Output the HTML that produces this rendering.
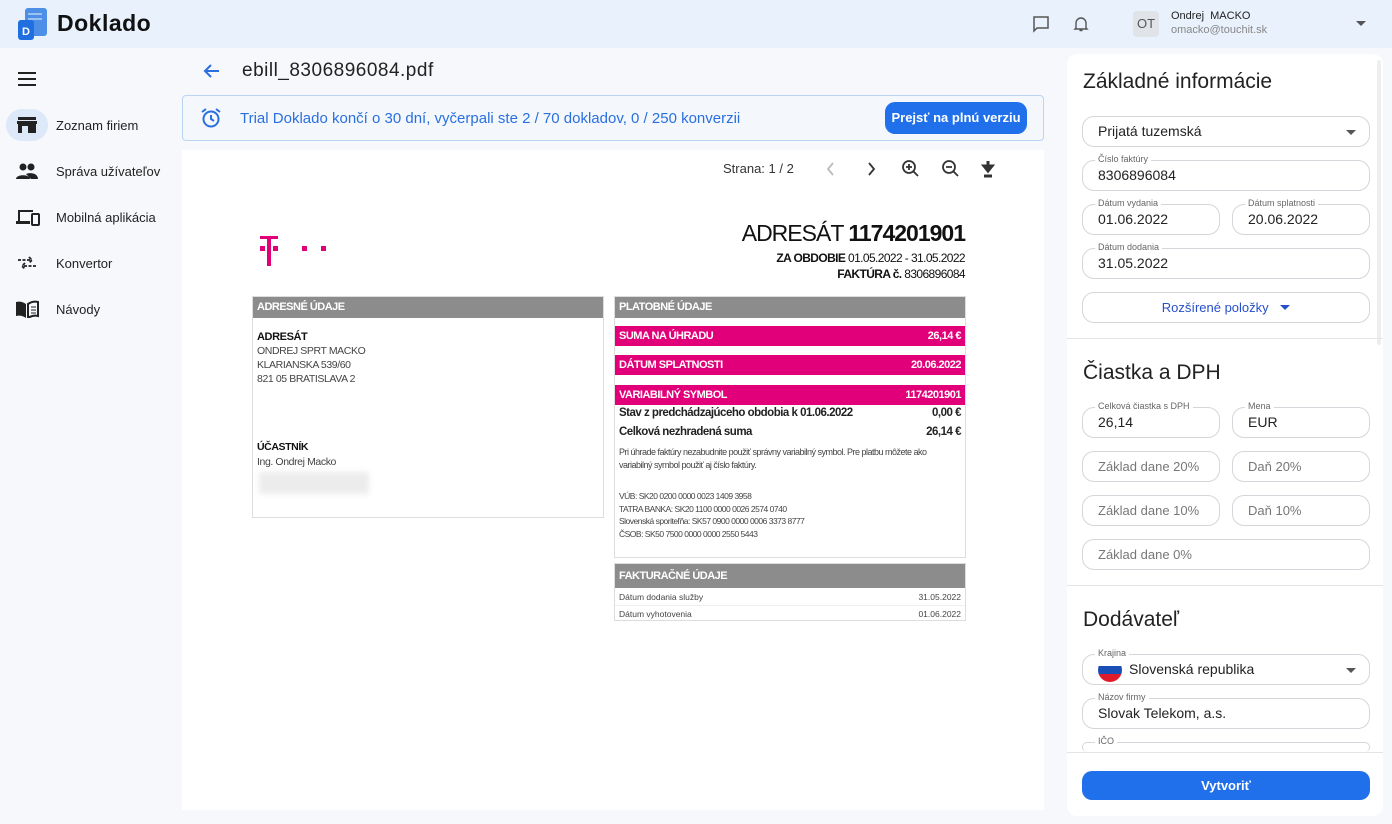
<!DOCTYPE html>
<html><head><meta charset="utf-8"><style>
*{box-sizing:border-box;margin:0;padding:0}
body{width:1392px;height:824px;overflow:hidden;background:#f6f8fb;font-family:"Liberation Sans",sans-serif;color:#222;position:relative}
.abs{position:absolute}
.hdr{left:0;top:0;width:1392px;height:48px;background:#e8f1fc}
.nav{left:16px;font-size:13px;color:#222}
.field{position:absolute;border:1px solid #d3d6da;border-radius:12px;height:31px;background:#fff;font-size:14px;color:#222;padding:0 15px;line-height:29px;white-space:nowrap;overflow:visible}
.field .lb{position:absolute;top:-8px;left:12px;background:#fff;padding:0 3px;font-size:9px;color:#666;line-height:12px}
.sm{font-size:13px;color:#777}
.pdf{font-family:"Liberation Sans Narrow","Liberation Sans",sans-serif}
.gbar{background:#8c8c8c;color:#fff;font-weight:bold;font-size:11px;height:21px;line-height:21px;padding-left:4px;letter-spacing:-.5px}
.mbar{background:#e2007a;color:#fff;font-weight:bold;font-size:11px;height:20px;line-height:20px;padding:0 4px;letter-spacing:-.5px;display:flex;justify-content:space-between}
.sec{font-size:21px;color:#222;position:absolute;left:1083px}
</style></head><body>
<div class="abs hdr"></div>
<svg class="abs" style="left:17px;top:7px" width="34" height="34" viewBox="0 0 34 34"><rect x="8" y="1" width="22" height="28" rx="3" fill="#4d8ee6"/><rect x="11" y="6" width="14" height="2" fill="#9cc2f3"/><rect x="11" y="11" width="14" height="2" fill="#9cc2f3"/><rect x="1" y="13" width="16" height="20" rx="3" fill="#1f6fe0"/><text x="5" y="28" font-size="11" font-weight="bold" fill="#fff" font-family="Liberation Sans">D</text></svg>
<div class="abs" style="left:57px;top:10px;font-size:23px;font-weight:bold;color:#111;letter-spacing:.5px">Doklado</div>
<svg class="abs" style="left:1032px;top:15px" width="18" height="18" viewBox="0 0 18 18"><path d="M2 2h14v11H5l-3 3z" fill="none" stroke="#555" stroke-width="1.5"/></svg>
<svg class="abs" style="left:1073px;top:15px" width="16" height="18" viewBox="0 0 16 18"><path d="M3 13V8a5 5 0 0110 0v5l1 1H2zM6.5 15.5h3" fill="none" stroke="#555" stroke-width="1.4"/></svg>
<div class="abs" style="left:1133px;top:11px;width:26px;height:26px;background:#e0e4e8;border-radius:4px;font-size:13px;color:#555;text-align:center;line-height:26px">OT</div>
<div class="abs" style="left:1171px;top:10px;font-size:11px;color:#222">Ondrej&nbsp; MACKO</div>
<div class="abs" style="left:1171px;top:24px;font-size:11px;color:#888">omacko@touchit.sk</div>
<div class="abs" style="left:1356px;top:21px;border:5px solid transparent;border-top:5px solid #555"></div>

<svg class="abs" style="left:17px;top:71px" width="20" height="16"><path d="M1 2h18M1 8h18M1 14h18" stroke="#222" stroke-width="2"/></svg>
<div class="abs" style="left:6px;top:109px;width:42px;height:32px;border-radius:16px;background:#dde8f8"></div>
<svg class="abs" style="left:16px;top:116px" width="22" height="18"><path d="M2 1h18v3H2z M1 5h20v3H1z M2 8h18v9H2z" fill="#222"/><rect x="6" y="10" width="6" height="7" fill="#dde8f8"/></svg>
<div class="abs nav" style="left:56px;top:118px">Zoznam firiem</div>
<svg class="abs" style="left:16px;top:162px" width="22" height="18"><circle cx="7" cy="5" r="3.5" fill="#222"/><circle cx="15" cy="5" r="3.5" fill="#222"/><path d="M0 17c0-5 14-5 14 0zM10 12c4-2 12-1 12 5h-7z" fill="#222"/></svg>
<div class="abs nav" style="left:56px;top:164px">Správa užívateľov</div>
<svg class="abs" style="left:15px;top:208px" width="25" height="18"><path d="M3 2h15v2H5v10H3z M1 13h14v3H1z" fill="#222"/><rect x="17" y="6" width="7" height="11" rx="1" fill="none" stroke="#222" stroke-width="2"/></svg>
<div class="abs nav" style="left:56px;top:210px">Mobilná aplikácia</div>
<svg class="abs" style="left:16px;top:255px" width="22" height="16"><path d="M2 5h14M13 2l3 3-3 3M20 11H6M9 8l-3 3 3 3" fill="none" stroke="#222" stroke-width="1.8" stroke-dasharray="3 1.5"/></svg>
<div class="abs nav" style="left:56px;top:256px">Konvertor</div>
<svg class="abs" style="left:15px;top:300px" width="24" height="18"><path d="M1 2c4-1 7 0 10 2v14c-3-2-6-3-10-2z" fill="#222"/><path d="M13 4c3-2 6-3 10-2v14c-4-1-7 0-10 2z" fill="none" stroke="#222" stroke-width="2"/><path d="M16 7h5M16 10h5M16 13h5" stroke="#222"/></svg>
<div class="abs nav" style="left:56px;top:302px">Návody</div>

<svg class="abs" style="left:202px;top:62px" width="18" height="18"><path d="M17 9H3M9 3L3 9l6 6" fill="none" stroke="#2a6fe0" stroke-width="2"/></svg>
<div class="abs" style="left:242px;top:60px;font-size:19px;color:#222;letter-spacing:.5px">ebill_8306896084.pdf</div>
<div class="abs" style="left:182px;top:95px;width:862px;height:46px;border:1px solid #bcd4f4;border-radius:4px;background:#f4f8fd"></div>
<svg class="abs" style="left:200px;top:107px" width="22" height="22"><circle cx="11" cy="12" r="7.5" fill="none" stroke="#2a6fe0" stroke-width="2"/><path d="M11 8v4l3 2M2 5l4-3M20 5l-4-3" fill="none" stroke="#2a6fe0" stroke-width="2"/></svg>
<div class="abs" style="left:240px;top:110px;font-size:15px;color:#2a6fe0">Trial Doklado končí o 30 dní, vyčerpali ste 2 / 70 dokladov, 0 / 250 konverzii</div>
<div class="abs" style="left:885px;top:102px;width:142px;height:32px;border-radius:10px;background:#1f70ea;color:#fff;font-size:13px;font-weight:bold;text-align:center;line-height:32px">Prejsť na plnú verziu</div>

<div class="abs" style="left:182px;top:150px;width:862px;height:660px;background:#fff"></div>
<div class="abs" style="left:723px;top:161px;font-size:13px;color:#333">Strana: 1 / 2</div>
<svg class="abs" style="left:820px;top:158px" width="190" height="22"><path d="M13 5l-5 6 5 6" fill="none" stroke="#bbb" stroke-width="1.8"/><path d="M49 5l5 6-5 6" fill="none" stroke="#333" stroke-width="1.8"/><circle cx="89" cy="9" r="6" fill="none" stroke="#333" stroke-width="1.8"/><path d="M93 13l5 5M86 9h6M89 6v6" stroke="#333" stroke-width="1.8"/><circle cx="129" cy="9" r="6" fill="none" stroke="#333" stroke-width="1.8"/><path d="M133 13l5 5M126 9h6" stroke="#333" stroke-width="1.8"/><path d="M168 3v9M164 8l4 5 4-5z M164 18h8" stroke="#333" stroke-width="3" fill="#333"/></svg>

<div class="pdf">
<svg class="abs" style="left:258px;top:233px" width="72" height="36"><path d="M2 3h18v3h-7v27h-4V6H2z" fill="#e2007a"/><rect x="2" y="13" width="5" height="5" fill="#e2007a"/><rect x="15" y="13" width="5" height="5" fill="#e2007a"/><rect x="44" y="13" width="5" height="5" fill="#e2007a"/><rect x="63" y="13" width="5" height="5" fill="#e2007a"/></svg>
<div class="abs" style="right:427px;top:220px;font-size:23px;color:#111;letter-spacing:-1px">ADRESÁT <b>1174201901</b></div>
<div class="abs" style="right:427px;top:251px;font-size:12px;color:#111;letter-spacing:-.6px"><b>ZA OBDOBIE</b> 01.05.2022 - 31.05.2022</div>
<div class="abs" style="right:427px;top:267px;font-size:12px;color:#111;letter-spacing:-.6px"><b>FAKTÚRA č.</b> 8306896084</div>

<div class="abs" style="left:252px;top:296px;width:352px;height:222px;border:1px solid #ddd">
<div class="gbar">ADRESNÉ ÚDAJE</div>
<div style="padding:12px 4px;font-size:10.5px;color:#444;line-height:14px;letter-spacing:-.4px"><b style="color:#111;font-size:11px">ADRESÁT</b><br>ONDREJ SPRT MACKO<br>KLARIANSKA 539/60<br>821 05 BRATISLAVA 2</div>
<div style="position:absolute;top:143px;left:4px;font-size:10.5px;color:#444;line-height:15px;letter-spacing:-.4px"><b style="color:#111">ÚČASTNÍK</b><br>Ing. Ondrej Macko</div>
<div style="position:absolute;top:175px;left:6px;width:110px;height:22px;background:#ececec;filter:blur(3px)"></div>
</div>

<div class="abs" style="left:614px;top:296px;width:352px;height:262px;border:1px solid #ddd">
<div class="gbar">PLATOBNÉ ÚDAJE</div>
<div class="mbar" style="margin-top:8px"><span>SUMA NA ÚHRADU</span><span>26,14 €</span></div>
<div class="mbar" style="margin-top:9px"><span>DÁTUM SPLATNOSTI</span><span>20.06.2022</span></div>
<div class="mbar" style="margin-top:10px"><span>VARIABILNÝ SYMBOL</span><span>1174201901</span></div>
<div style="display:flex;justify-content:space-between;padding:2px 4px;font-size:11.5px;font-weight:bold;letter-spacing:-.5px"><span>Stav z predchádzajúceho obdobia k 01.06.2022</span><span>0,00 €</span></div>
<div style="display:flex;justify-content:space-between;padding:5px 4px 0;font-size:11.5px;font-weight:bold;letter-spacing:-.5px"><span>Celková nezhradená suma</span><span>26,14 €</span></div>
<div style="padding:8px 4px;font-size:9px;color:#444;line-height:13px;letter-spacing:-.5px">Pri úhrade faktúry nezabudnite použiť správny variabilný symbol. Pre platbu môžete ako variabilný symbol použiť aj číslo faktúry.</div>
<div style="padding:10px 4px 0;font-size:8.5px;color:#444;line-height:12.5px;letter-spacing:-.5px">VÚB: SK20 0200 0000 0023 1409 3958<br>TATRA BANKA: SK20 1100 0000 0026 2574 0740<br>Slovenská sporiteľňa: SK57 0900 0000 0006 3373 8777<br>ČSOB: SK50 7500 0000 0000 2550 5443</div>
</div>

<div class="abs" style="left:614px;top:563px;width:352px;height:58px;border:1px solid #ddd">
<div class="gbar" style="height:24px;line-height:24px">FAKTURAČNÉ ÚDAJE</div>
<div style="display:flex;justify-content:space-between;padding:4px 4px 0;font-size:8.5px;color:#444;border-bottom:1px solid #eee;height:18px"><span>Dátum dodania služby</span><span>31.05.2022</span></div>
<div style="display:flex;justify-content:space-between;padding:3px 4px 0;font-size:8.5px;color:#444"><span>Dátum vyhotovenia</span><span>01.06.2022</span></div>
</div>
</div>

<div class="abs" style="left:1067px;top:54px;width:316px;height:762px;background:#fff;border-radius:10px"></div>
<div class="abs" style="left:1377px;top:60px;width:4px;height:285px;background:#eee;border-radius:2px"></div>
<div class="sec" style="top:70px">Základné informácie</div>
<div class="field" style="left:1082px;top:116px;width:288px">Prijatá tuzemská<span class="abs" style="right:13px;top:13px;border:5px solid transparent;border-top:5px solid #555"></span></div>
<div class="field" style="left:1082px;top:160px;width:288px"><span class="lb">Číslo faktúry</span>8306896084</div>
<div class="field" style="left:1082px;top:204px;width:138px"><span class="lb">Dátum vydania</span>01.06.2022</div>
<div class="field" style="left:1232px;top:204px;width:138px"><span class="lb">Dátum splatnosti</span>20.06.2022</div>
<div class="field" style="left:1082px;top:248px;width:288px"><span class="lb">Dátum dodania</span>31.05.2022</div>
<div class="field" style="left:1082px;top:292px;width:288px;text-align:center;color:#2550c8;font-size:13px">Rozšírené položky <span style="display:inline-block;margin-left:8px;border:5px solid transparent;border-top:5px solid #2550c8;vertical-align:-3px"></span></div>
<div class="abs" style="left:1067px;top:338px;width:316px;height:1px;background:#e4e4e4"></div>
<div class="sec" style="top:361px">Čiastka a DPH</div>
<div class="field" style="left:1082px;top:407px;width:138px"><span class="lb">Celková čiastka s DPH</span>26,14</div>
<div class="field" style="left:1232px;top:407px;width:138px"><span class="lb">Mena</span>EUR</div>
<div class="field sm" style="left:1082px;top:451px;width:138px">Základ dane 20%</div>
<div class="field sm" style="left:1232px;top:451px;width:138px">Daň 20%</div>
<div class="field sm" style="left:1082px;top:495px;width:138px">Základ dane 10%</div>
<div class="field sm" style="left:1232px;top:495px;width:138px">Daň 10%</div>
<div class="field sm" style="left:1082px;top:539px;width:288px">Základ dane 0%</div>
<div class="abs" style="left:1067px;top:585px;width:316px;height:1px;background:#e4e4e4"></div>
<div class="sec" style="top:608px">Dodávateľ</div>
<div class="field" style="left:1082px;top:654px;width:288px;padding-left:46px"><span class="lb">Krajina</span><span class="abs" style="left:15px;top:3px;width:24px;height:24px;border-radius:50%;background:linear-gradient(#fff 0 33%,#1b4fb8 33% 66%,#e01b2c 66%)"></span>Slovenská republika<span class="abs" style="right:13px;top:13px;border:5px solid transparent;border-top:5px solid #555"></span></div>
<div class="field" style="left:1082px;top:698px;width:288px"><span class="lb">Názov firmy</span>Slovak Telekom, a.s.</div>
<div class="field" style="left:1082px;top:742px;width:288px;height:10px;border-bottom:none"><span class="lb">IČO</span></div>
<div class="abs" style="left:1067px;top:752px;width:316px;height:64px;background:#fff;border-top:1px solid #e4e4e4;border-radius:0 0 10px 10px"></div>
<div class="abs" style="left:1082px;top:771px;width:288px;height:29px;border-radius:10px;background:#1f70ea;color:#fff;font-weight:bold;font-size:13px;text-align:center;line-height:29px">Vytvoriť</div>
</body></html>
